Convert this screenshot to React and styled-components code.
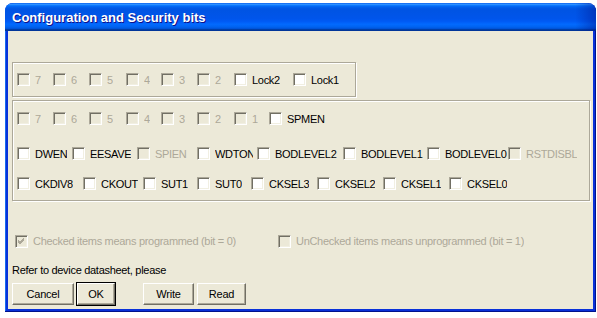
import React from "react";
import styled, { createGlobalStyle } from "styled-components";

const GlobalStyle = createGlobalStyle`
  html, body { margin: 0; padding: 0; background: #ffffff; }
  body { font-family: "Liberation Sans", Arial, sans-serif; }
`;

const Window = styled.div`
  margin: 3px 0 0 5px;
  width: 591px;
  height: 309px;
  display: flex;
  flex-direction: column;
  background: #0831d9;
  border-radius: 8px 8px 0 0;
  box-shadow: inset -1px -1px 0 #00138c, inset 1px 0 0 #166aee;
  overflow: hidden;
`;

const TitleBar = styled.div`
  height: 28px;
  flex: none;
  display: flex;
  align-items: center;
  padding-left: 7px;
  box-sizing: border-box;
  color: #ffffff;
  font: bold 13px "Liberation Sans", Arial, sans-serif;
  text-shadow: 1px 1px 0 #0f1089;
  border-radius: 8px 8px 0 0;
  background:
    linear-gradient(to right, rgba(0, 20, 140, 0) 96.5%, rgba(0, 20, 140, 0.45) 100%),
    linear-gradient(
      180deg,
      #0058ee 0%,
      #3593ff 4%,
      #288eff 6%,
      #127dff 8%,
      #036ffc 10%,
      #0262ee 14%,
      #0057e5 20%,
      #0054e3 24%,
      #0055eb 56%,
      #005bf5 66%,
      #026afe 76%,
      #0062ef 86%,
      #0052d6 92%,
      #0040ab 94%,
      #003092 100%
    );
`;

const Client = styled.div`
  flex: 1;
  margin: 0 3px 3px 3px;
  background: #ece9d8;
  display: flex;
  flex-direction: column;
  font-size: 11px;
  letter-spacing: -0.3px;
  color: #000000;
`;

const Group = styled.div`
  box-sizing: border-box;
  margin-left: 4px;
  margin-top: ${(p) => p.$mt}px;
  width: ${(p) => p.$w}px;
  height: ${(p) => p.$h}px;
  border: 1px solid #aca899;
  box-shadow: inset 1px 1px 0 #ffffff, 1px 1px 0 #ffffff;
  display: flex;
  flex-direction: column;
  padding-left: 4px;
  justify-content: ${(p) => (p.$center ? "center" : "flex-start")};
`;

const Row = styled.div`
  display: flex;
  align-items: center;
  height: 13px;
  margin-top: ${(p) => p.$mt || 0}px;
`;

const Item = styled.label`
  flex: none;
  width: ${(p) => (p.$w ? `${p.$w}px` : "auto")};
  display: flex;
  align-items: center;
  gap: 5px;
  overflow: hidden;
  white-space: nowrap;
  height: 14px;
  line-height: 14px;
  color: ${(p) => (p.$disabled ? "#aca899" : "#000000")};
`;

const Text = styled.span`
  overflow: hidden;
  max-width: ${(p) => (p.$max ? `${p.$max}px` : "none")};
`;

const Box = styled.span`
  flex: none;
  box-sizing: border-box;
  width: 13px;
  height: 13px;
  border-top: 1px solid #aca899;
  border-left: 1px solid #aca899;
  border-right: 1px solid #ffffff;
  border-bottom: 1px solid #ffffff;
  box-shadow: inset 1px 1px 0 #716f64, inset -1px -1px 0 #f1efe2;
  background: ${(p) => (p.$disabled ? "#ece9d8" : "#ffffff")};
  display: flex;
  align-items: center;
  justify-content: center;
`;

const Legend = styled.div`
  display: flex;
  align-items: center;
  margin: 33px 0 0 7px;
  height: 14px;
`;

const Note = styled.div`
  margin: 15px 0 0 4px;
  height: 14px;
  line-height: 14px;
`;

const ButtonBar = styled.div`
  display: flex;
  margin: 6px 0 0 4px;
`;

const Button = styled.button`
  box-sizing: border-box;
  width: ${(p) => p.$w}px;
  height: 22px;
  margin-left: ${(p) => p.$ml || 0}px;
  padding: 0;
  background: #ece9d8;
  font: 11px "Liberation Sans", Arial, sans-serif;
  letter-spacing: -0.2px;
  color: #000000;
  border-top: 1px solid #ffffff;
  border-left: 1px solid #ffffff;
  border-right: 1px solid #716f64;
  border-bottom: 1px solid #716f64;
  box-shadow: ${(p) =>
    p.$default
      ? "inset -1px -1px 0 #aca899, 0 0 0 1px #000000"
      : "inset -1px -1px 0 #aca899"};
  outline: none;
`;

function Check({ label, w, disabled, checked, clip }) {
  return (
    <Item $w={w} $disabled={disabled}>
      <Box $disabled={disabled}>
        {checked && (
          <svg width="7" height="7" viewBox="0 0 7 7">
            <path
              d="M0 2 L2 4 L6 0 M0 3 L2 5 L6 1 M0 4 L2 6 L6 2"
              stroke={disabled ? "#aca899" : "#000"}
              strokeWidth="1"
              fill="none"
              shapeRendering="crispEdges"
            />
          </svg>
        )}
      </Box>
      <Text $max={clip}>{label}</Text>
    </Item>
  );
}

const lockBits = [
  { label: "7", w: 36, disabled: true },
  { label: "6", w: 36, disabled: true },
  { label: "5", w: 37, disabled: true },
  { label: "4", w: 35, disabled: true },
  { label: "3", w: 36, disabled: true },
  { label: "2", w: 37, disabled: true },
  { label: "Lock2", w: 59 },
  { label: "Lock1" },
];

const row1 = [
  { label: "7", w: 36, disabled: true },
  { label: "6", w: 36, disabled: true },
  { label: "5", w: 37, disabled: true },
  { label: "4", w: 35, disabled: true },
  { label: "3", w: 36, disabled: true },
  { label: "2", w: 37, disabled: true },
  { label: "1", w: 35, disabled: true },
  { label: "SPMEN" },
];

const row2 = [
  { label: "DWEN", w: 55 },
  { label: "EESAVE", w: 65 },
  { label: "SPIEN", w: 60, disabled: true },
  { label: "WDTON", w: 60, clip: 38 },
  { label: "BODLEVEL2", w: 86 },
  { label: "BODLEVEL1", w: 84 },
  { label: "BODLEVEL0", w: 81 },
  { label: "RSTDISBL", disabled: true },
];

const row3 = [
  { label: "CKDIV8", w: 66 },
  { label: "CKOUT", w: 60 },
  { label: "SUT1", w: 54 },
  { label: "SUT0", w: 54 },
  { label: "CKSEL3", w: 66 },
  { label: "CKSEL2", w: 66 },
  { label: "CKSEL1", w: 66 },
  { label: "CKSEL0" },
];

export default function App() {
  return (
    <>
      <GlobalStyle />
      <Window>
        <TitleBar>Configuration and Security bits</TitleBar>
        <Client>
          <Group $mt={31} $w={344} $h={35} $center>
            <Row>
              {lockBits.map((b) => (
                <Check key={b.label + "l"} {...b} />
              ))}
            </Row>
          </Group>
          <Group $mt={3} $w={578} $h={101}>
            <Row $mt={11}>
              {row1.map((b) => (
                <Check key={b.label + "r1"} {...b} />
              ))}
            </Row>
            <Row $mt={22}>
              {row2.map((b) => (
                <Check key={b.label} {...b} />
              ))}
            </Row>
            <Row $mt={17}>
              {row3.map((b) => (
                <Check key={b.label} {...b} />
              ))}
            </Row>
          </Group>
          <Legend>
            <Check w={263} disabled checked label="Checked items means programmed (bit = 0)" />
            <Check disabled label="UnChecked items means unprogrammed (bit = 1)" />
          </Legend>
          <Note>Refer to device datasheet, please</Note>
          <ButtonBar>
            <Button $w={62}>Cancel</Button>
            <Button $w={38} $ml={3} $default>OK</Button>
            <Button $w={51} $ml={28}>Write</Button>
            <Button $w={49} $ml={3}>Read</Button>
          </ButtonBar>
        </Client>
      </Window>
    </>
  );
}
